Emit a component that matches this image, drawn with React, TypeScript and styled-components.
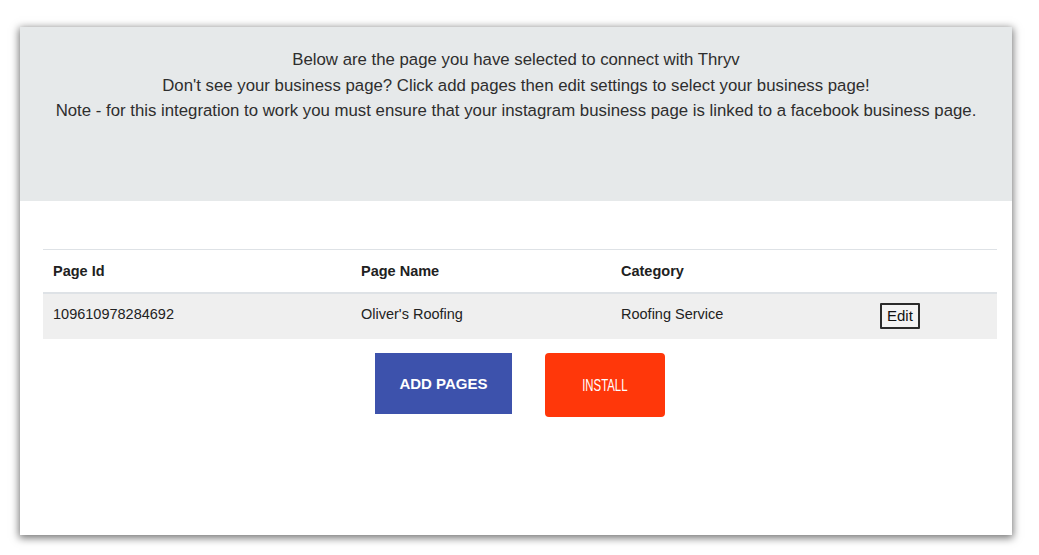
import React from 'react';
import styled, { createGlobalStyle } from 'styled-components';

const GlobalStyle = createGlobalStyle`
  html, body {
    margin: 0;
    padding: 0;
    background: #ffffff;
    font-family: 'Liberation Sans', Arial, sans-serif;
  }
`;

const pages = [
  {
    id: '109610978284692',
    name: "Oliver's Roofing",
    category: 'Roofing Service',
  },
];

export default function App() {
  return (
    <>
      <GlobalStyle />
      <Page>
        <Card>
          <Banner>
            <p>Below are the page you have selected to connect with Thryv</p>
            <p>Don't see your business page? Click add pages then edit settings to select your business page!</p>
            <p>
              Note - for this integration to work you must ensure that your instagram business page is linked to a
              facebook business page.
            </p>
          </Banner>
          <Body>
            <Table>
              <colgroup>
                <col style={{ width: 308 }} />
                <col style={{ width: 260 }} />
                <col style={{ width: 259 }} />
                <col />
              </colgroup>
              <thead>
                <tr>
                  <Th>Page Id</Th>
                  <Th>Page Name</Th>
                  <Th>Category</Th>
                  <Th />
                </tr>
              </thead>
              <tbody>
                {pages.map((p) => (
                  <Row key={p.id}>
                    <Td>{p.id}</Td>
                    <Td>{p.name}</Td>
                    <Td>{p.category}</Td>
                    <Td>
                      <EditButton>Edit</EditButton>
                    </Td>
                  </Row>
                ))}
              </tbody>
            </Table>
            <Actions>
              <AddButton>ADD PAGES</AddButton>
              <InstallButton>
                <Narrow>INSTALL</Narrow>
              </InstallButton>
            </Actions>
          </Body>
        </Card>
      </Page>
    </>
  );
}

const Page = styled.div`
  padding: 27px 27px 20px 20px;
`;

const Card = styled.div`
  width: 992px;
  height: 508px;
  background: #fff;
  box-shadow: 0 2px 8px 1px rgba(0, 0, 0, 0.55);
  display: flex;
  flex-direction: column;
`;

const Banner = styled.div`
  height: 174px;
  box-sizing: border-box;
  background: #e6e9ea;
  padding-top: 20px;
  text-align: center;
  color: #2e2e2e;
  font-family: 'Liberation Sans', Arial, sans-serif;
  font-size: 16.8px;
  line-height: 25.7px;
  p {
    margin: 0;
  }
`;

const Body = styled.div`
  padding: 48px 15px 0 23px;
`;

const Table = styled.table`
  width: 100%;
  table-layout: fixed;
  border-collapse: collapse;
  font-size: 14.5px;
  color: #222;
  border-top: 1px solid #dee2e6;
`;

const Th = styled.th`
  text-align: left;
  font-weight: bold;
  height: 42px;
  padding: 0 10px;
  border-bottom: 2px solid #dee2e6;
  color: #212121;
`;

const Row = styled.tr`
  background: #efefef;
`;

const Td = styled.td`
  height: 46px;
  box-sizing: border-box;
  padding: 12px 10px 0;
  line-height: 17px;
  vertical-align: top;
`;

const EditButton = styled.button`
  display: block;
  margin-top: -3px;
  font-family: 'Liberation Sans', Arial, sans-serif;
  font-size: 15px;
  line-height: 18px;
  padding: 2px 5px;
  background: #f3f3f3;
  color: #111;
  border: 2px solid #2b2b2b;
  border-radius: 1px;
`;

const Actions = styled.div`
  display: flex;
  justify-content: center;
  gap: 33px;
  margin-top: 14px;
`;

const AddButton = styled.button`
  width: 137px;
  height: 61px;
  border: none;
  background: #3d52ac;
  color: #fff;
  font-family: 'Liberation Sans', Arial, sans-serif;
  font-weight: bold;
  font-size: 15px;
`;

const InstallButton = styled.button`
  width: 120px;
  height: 64px;
  border: none;
  border-radius: 4px;
  background: #ff370a;
  color: #fff;
  font-family: 'Liberation Sans', Arial, sans-serif;
  font-size: 17px;
  padding-top: 2px;
`;

const Narrow = styled.span`
  display: inline-block;
  transform: scaleX(0.67);
`;
